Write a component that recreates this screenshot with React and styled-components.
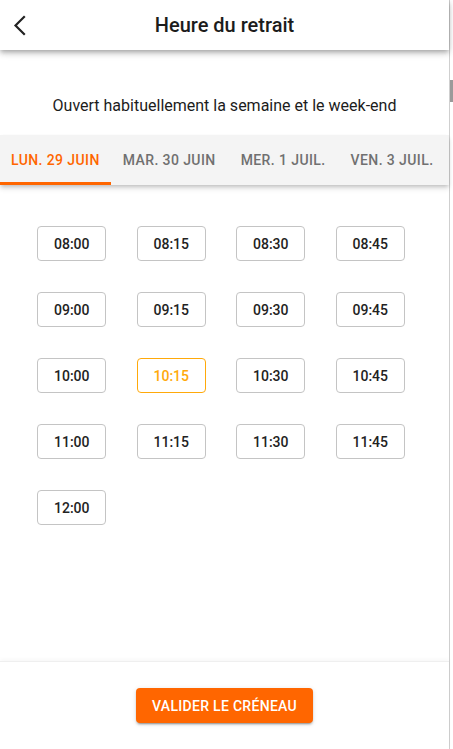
import React, { useState } from "react";
import styled, { createGlobalStyle } from "styled-components";

const Global = createGlobalStyle`
  html, body { margin: 0; padding: 0; background: #fff; }
  body { font-family: Roboto, "Noto Sans", Arial, sans-serif; overflow: hidden; }
  * { box-sizing: border-box; }
`;

const Screen = styled.div`
  display: flex;
  height: 749px;
  width: 453px;
`;

const Panel = styled.div`
  width: 450px;
  height: 100%;
  display: flex;
  flex-direction: column;
  background: #fff;
  border-right: 1px solid #cfcfcf;
`;

const Side = styled.div`
  flex: 1;
  display: flex;
  flex-direction: column;
  padding-top: 80px;
`;

const Thumb = styled.div`
  height: 22px;
  background: #9a9a9a;
`;

const Header = styled.header`
  position: relative;
  z-index: 2;
  height: 50px;
  flex-shrink: 0;
  display: grid;
  grid-template-columns: 44px 1fr 44px;
  align-items: center;
  background: #fff;
  box-shadow: 0 2px 4px -1px rgba(0,0,0,0.2), 0 4px 5px 0 rgba(0,0,0,0.14), 0 1px 10px 0 rgba(0,0,0,0.12);
`;

const BackBtn = styled.button`
  border: 0;
  background: none;
  padding: 0 0 0 9px;
  height: 50px;
  display: flex;
  align-items: center;
  color: #222;
  cursor: pointer;
`;

const Title = styled.h1`
  margin: 0;
  text-align: center;
  font-size: 20px;
  font-weight: 500;
  color: #1c1c1c;
`;

const Subtitle = styled.p`
  margin: 46px 0 0;
  text-align: center;
  font-size: 16px;
  color: #1c1c1c;
  line-height: 20px;
`;

const Tabs = styled.nav`
  margin-top: 19px;
  height: 50px;
  flex-shrink: 0;
  display: flex;
  background: #f4f4f4;
  box-shadow: 0 2px 4px -1px rgba(0,0,0,0.2), 0 4px 5px 0 rgba(0,0,0,0.1);
  position: relative;
  z-index: 1;
`;

const Tab = styled.button`
  border: 0;
  background: none;
  padding: 0 11px;
  margin-right: ${p => p.$gap}px;
  height: 50px;
  font-family: inherit;
  font-size: 14px;
  font-weight: 500;
  letter-spacing: 0.4px;
  text-transform: uppercase;
  white-space: nowrap;
  color: ${p => (p.$active ? "#ff6600" : "#707070")};
  border-bottom: 3px solid ${p => (p.$active ? "#ff6600" : "transparent")};
  padding-top: 3px;
  cursor: pointer;
`;

const Grid = styled.div`
  margin: 41px 0 0 22px;
  width: 398px;
  display: grid;
  grid-template-columns: repeat(4, 1fr);
  row-gap: 31px;
  justify-items: center;
`;

const Slot = styled.button`
  width: 69px;
  height: 35px;
  border-radius: 4px;
  background: #fff;
  border: 1px solid ${p => (p.$selected ? "#ffa90a" : "#c4c4c4")};
  color: ${p => (p.$selected ? "#ffa90a" : "#222")};
  font-family: inherit;
  font-size: 14px;
  font-weight: 500;
  padding: 0;
  cursor: pointer;
`;

const Spacer = styled.div`
  flex: 1;
`;

const Footer = styled.footer`
  height: 88px;
  flex-shrink: 0;
  display: flex;
  justify-content: center;
  align-items: flex-start;
  padding-top: 26px;
  border-top: 1px solid #efefef;
  box-shadow: 0 -2px 4px rgba(0,0,0,0.03);
`;

const Primary = styled.button`
  border: 0;
  border-radius: 4px;
  background: #ff6600;
  color: #fff;
  height: 35px;
  padding: 0 16px;
  font-family: inherit;
  font-size: 14px;
  font-weight: 500;
  letter-spacing: 0.3px;
  text-transform: uppercase;
  box-shadow: 0 3px 1px -2px rgba(0,0,0,0.2), 0 2px 2px 0 rgba(0,0,0,0.14), 0 1px 5px 0 rgba(0,0,0,0.12);
  cursor: pointer;
`;

const days = ["Lun. 29 juin", "Mar. 30 juin", "Mer. 1 juil.", "Ven. 3 juil."];
const gaps = [1, 3, 3, 0];
const slots = [
  "08:00", "08:15", "08:30", "08:45",
  "09:00", "09:15", "09:30", "09:45",
  "10:00", "10:15", "10:30", "10:45",
  "11:00", "11:15", "11:30", "11:45",
  "12:00",
];

export default function App() {
  const [day, setDay] = useState(0);
  const [slot, setSlot] = useState("10:15");
  return (
    <>
      <Global />
      <Screen>
        <Panel>
          <Header>
            <BackBtn aria-label="Retour">
              <svg width="22" height="22" viewBox="0 0 22 22" fill="none">
                <path d="M15 3 L6.5 11.5 L15 20" stroke="#222" strokeWidth="2.2" strokeLinecap="square" strokeLinejoin="miter" />
              </svg>
            </BackBtn>
            <Title>Heure du retrait</Title>
            <span />
          </Header>
          <Subtitle>Ouvert habituellement la semaine et le week-end</Subtitle>
          <Tabs>
            {days.map((d, i) => (
              <Tab key={d} $active={i === day} $gap={gaps[i]} onClick={() => setDay(i)}>
                {d}
              </Tab>
            ))}
          </Tabs>
          <Grid>
            {slots.map(s => (
              <Slot key={s} $selected={s === slot} onClick={() => setSlot(s)}>
                {s}
              </Slot>
            ))}
          </Grid>
          <Spacer />
          <Footer>
            <Primary>Valider le créneau</Primary>
          </Footer>
        </Panel>
        <Side>
          <Thumb />
        </Side>
      </Screen>
    </>
  );
}
